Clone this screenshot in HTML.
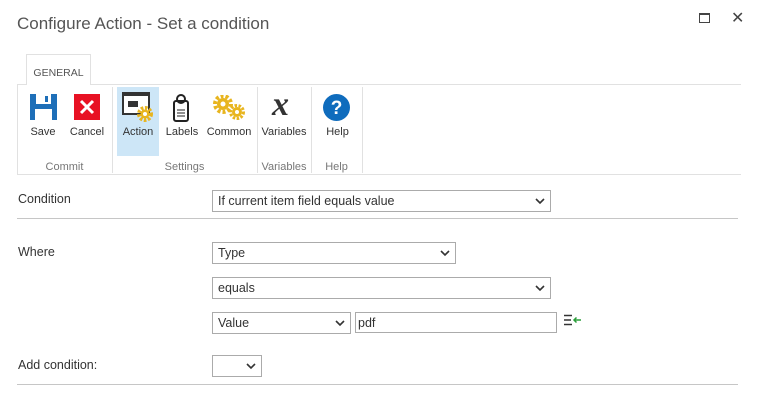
<!DOCTYPE html>
<html><head><style>
*{box-sizing:border-box;margin:0;padding:0}
body{width:757px;height:413px;background:#fff;font-family:"Liberation Sans",sans-serif;color:#444;position:relative;overflow:hidden}
.a{position:absolute}
.t{font-size:17px;color:#555;left:17px;top:14px}
.sel{position:absolute;border:1px solid #ababab;height:22px;font-size:12.5px;color:#333;padding:3px 0 0 5px;background:#fff}
.sel svg{position:absolute;right:5px;top:7px}
.lbl{font-size:12.5px;color:#333;position:absolute;left:18px}
.rl{position:absolute;font-size:11px;color:#333;text-align:center}
.gl{position:absolute;font-size:11px;color:#777;text-align:center;top:161px}
.sep{position:absolute;top:87px;width:1px;height:86px;background:#e1e1e1}
</style></head><body>
<div class="a t">Configure Action - Set a condition</div>
<div class="a" style="left:699px;top:13px;width:11px;height:10px;border:1px solid #444;border-top-width:2px"></div>
<div class="a" style="left:731px;top:8px;font-size:16px;color:#444">✕</div>

<div class="a" style="left:26px;top:54px;width:65px;height:31px;border:1px solid #e1e1e1;border-bottom:none;background:#fff;font-size:10.5px;color:#555;text-align:center;padding-top:12px;z-index:2">GENERAL</div>
<div class="a" style="left:17px;top:84px;width:724px;height:91px;border:1px solid #e1e1e1;border-right:none"></div>
<div class="sep" style="left:112px"></div><div class="sep" style="left:257px"></div><div class="sep" style="left:311px"></div><div class="sep" style="left:362px"></div>
<div class="a" style="left:117px;top:87px;width:42px;height:69px;background:#cde6f7"></div>

<svg class="a" style="left:30px;top:94px" width="27" height="26" viewBox="0 0 27 26"><path d="M0 0h27v26H0z" fill="#1e6fb8"/><rect x="6" y="0" width="15" height="10" fill="#fff"/><rect x="5" y="15" width="17" height="11" fill="#fff"/><rect x="15" y="2" width="3" height="6" fill="#1e6fb8"/></svg>
<svg class="a" style="left:74px;top:94px" width="26" height="26"><rect width="26" height="26" fill="#e81123"/><path d="M7 7L19 19M19 7L7 19" stroke="#fff" stroke-width="3"/></svg>
<svg class="a" style="left:122px;top:92px" width="32" height="32"><rect x="1" y="1" width="26" height="21" fill="#fff" stroke="#333" stroke-width="2"/><rect x="1" y="1" width="26" height="3" fill="#333"/><rect x="6" y="9" width="10" height="6" fill="#333"/><circle cx="23" cy="22" r="6" fill="none" stroke="#e8b51f" stroke-width="4" stroke-dasharray="2.5 1.5"/><circle cx="23" cy="22" r="4.5" fill="#e8b51f"/><circle cx="23" cy="22" r="2" fill="#fff"/></svg>
<svg class="a" style="left:172px;top:93px" width="18" height="30"><rect x="2" y="8" width="14" height="20" rx="2" fill="#fff" stroke="#222" stroke-width="2"/><circle cx="9" cy="6" r="4" fill="none" stroke="#222" stroke-width="2"/><path d="M5 17h8M5 20h8M5 23h8" stroke="#222"/></svg>
<svg class="a" style="left:213px;top:95px" width="34" height="26"><circle cx="10" cy="9" r="8" fill="none" stroke="#e8b51f" stroke-width="4" stroke-dasharray="3 2"/><circle cx="10" cy="9" r="6" fill="#e8b51f"/><circle cx="10" cy="9" r="2.5" fill="#fff"/><circle cx="24" cy="17" r="6.5" fill="none" stroke="#e8b51f" stroke-width="3" stroke-dasharray="2.5 1.5"/><circle cx="24" cy="17" r="5" fill="#e8b51f"/><circle cx="24" cy="17" r="2" fill="#fff"/></svg>
<div class="a" style="left:272px;top:88px;font-family:'Liberation Serif',serif;font-style:italic;font-weight:bold;font-size:34px;color:#333;line-height:34px">x</div>
<svg class="a" style="left:323px;top:94px" width="27" height="27"><circle cx="13.5" cy="13.5" r="13.5" fill="#0f6cbd"/><text x="13.5" y="20" text-anchor="middle" fill="#fff" font-size="19" font-weight="bold" font-family="Liberation Sans">?</text></svg>

<div class="rl" style="left:25px;top:126px;width:36px">Save</div>
<div class="rl" style="left:67px;top:126px;width:40px">Cancel</div>
<div class="rl" style="left:117px;top:126px;width:42px">Action</div>
<div class="rl" style="left:162px;top:126px;width:40px">Labels</div>
<div class="rl" style="left:204px;top:126px;width:50px">Common</div>
<div class="rl" style="left:259px;top:126px;width:50px">Variables</div>
<div class="rl" style="left:315px;top:126px;width:45px">Help</div>
<div class="gl" style="left:17px;width:95px">Commit</div>
<div class="gl" style="left:112px;width:145px">Settings</div>
<div class="gl" style="left:257px;width:54px">Variables</div>
<div class="gl" style="left:311px;width:51px">Help</div>

<div class="lbl" style="top:192px">Condition</div>
<div class="sel" style="left:212px;top:190px;width:339px">If current item field equals value<svg width="10" height="7"><path d="M1 1l4 4 4-4" stroke="#333" stroke-width="1.6" fill="none"/></svg></div>
<div class="a" style="left:17px;top:218px;width:721px;height:1px;background:#c6c6c6"></div>

<div class="lbl" style="top:245px">Where</div>
<div class="sel" style="left:212px;top:242px;width:244px">Type<svg width="10" height="7"><path d="M1 1l4 4 4-4" stroke="#333" stroke-width="1.6" fill="none"/></svg></div>
<div class="sel" style="left:212px;top:277px;width:339px">equals<svg width="10" height="7"><path d="M1 1l4 4 4-4" stroke="#333" stroke-width="1.6" fill="none"/></svg></div>
<div class="sel" style="left:212px;top:312px;width:139px">Value<svg width="10" height="7"><path d="M1 1l4 4 4-4" stroke="#333" stroke-width="1.6" fill="none"/></svg></div>
<div class="sel" style="left:355px;top:312px;width:202px;height:21px;padding-left:2px">pdf</div>
<svg class="a" style="left:564px;top:314px" width="18" height="12"><path d="M0 1.5h8M0 6h7M0 10.5h8" stroke="#333" stroke-width="1.5"/><path d="M10 6h7M12.5 3.5L10 6l2.5 2.5" stroke="#2a9d3a" stroke-width="1.5" fill="none"/></svg>

<div class="lbl" style="top:358px">Add condition:</div>
<div class="sel" style="left:212px;top:355px;width:50px"><svg width="10" height="7"><path d="M1 1l4 4 4-4" stroke="#333" stroke-width="1.6" fill="none"/></svg></div>
<div class="a" style="left:17px;top:384px;width:721px;height:1px;background:#c6c6c6"></div>
</body></html>
